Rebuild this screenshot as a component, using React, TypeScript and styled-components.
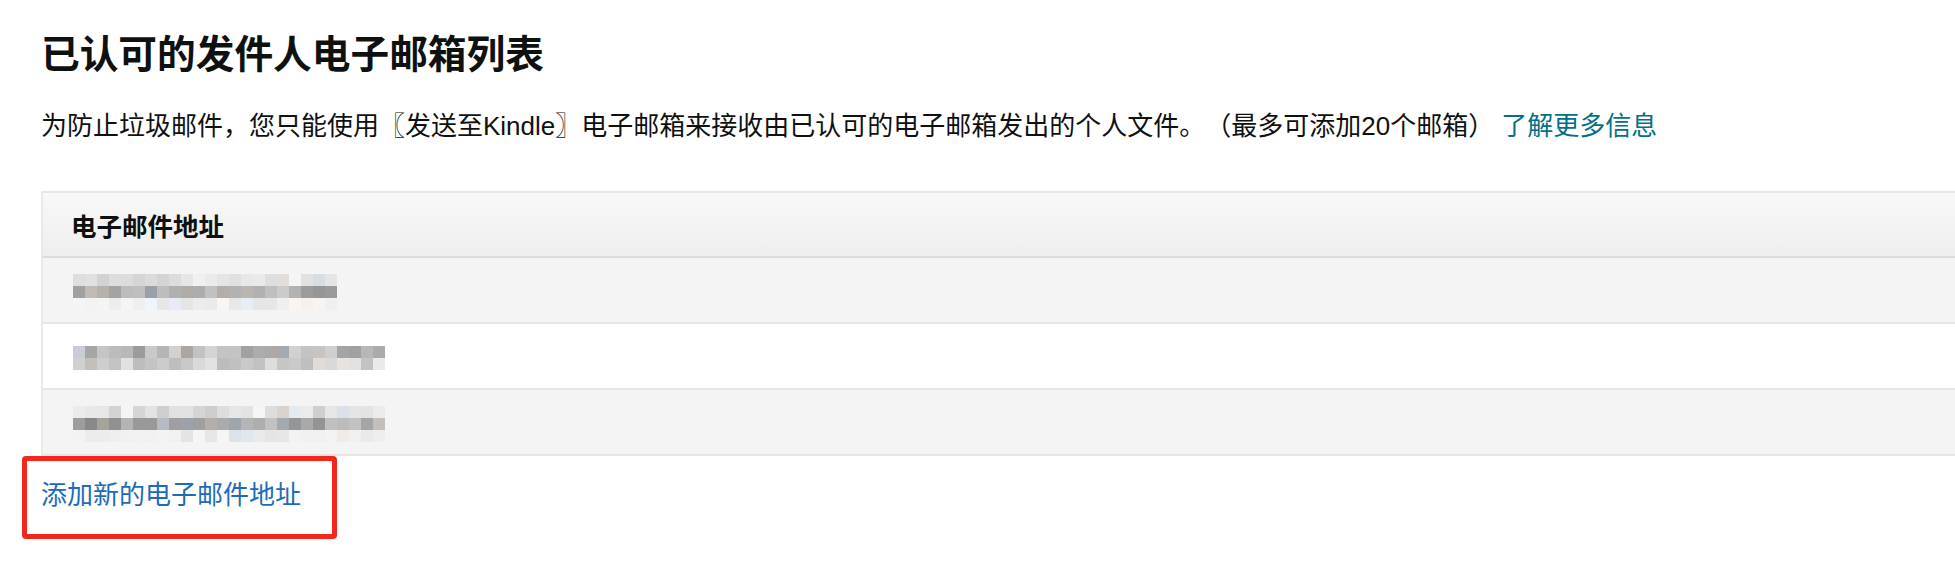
import React from "react";
import styled, { createGlobalStyle } from "styled-components";

const GlobalStyle = createGlobalStyle`
  html, body {
    margin: 0;
    padding: 0;
    background: #ffffff;
    overflow: hidden;
  }
  body {
    font-family: "Liberation Sans", "Noto Sans CJK SC", sans-serif;
    color: #0f1111;
    text-spacing-trim: space-all;
  }
`;

const Page = styled.div`
  width: 1955px;
  box-sizing: border-box;
  padding: 32px 0 40px 41px;
`;

const Title = styled.h1`
  margin: 0;
  font-size: 38.7px;
  line-height: 46px;
  font-weight: 700;
  color: #0f1111;
`;

const Description = styled.p`
  margin: 30px 0 0 0;
  font-size: 26px;
  line-height: 36px;
  color: #0f1111;
  white-space: nowrap;
  text-spacing-trim: space-all;
`;

const InfoLink = styled.a`
  color: #007185;
  text-decoration: none;
  margin-left: 7px;
`;

const Table = styled.div`
  margin-top: 47px;
  margin-right: -30px;
  border-top: 2px solid #e6e6e6;
  border-left: 2px solid #e9e9e9;
  display: flex;
  flex-direction: column;
`;

const HeaderRow = styled.div`
  height: 63px;
  display: flex;
  align-items: center;
  padding-left: 28px;
  background: linear-gradient(#f8f8f8, #eeeeee);
  box-shadow: inset 0 1px 0 #fbfbfb;
  border-bottom: 2px solid #dcdcdc;
  font-size: 25.5px;
  font-weight: 700;
  color: #0f1111;
`;

const Row = styled.div<{ $alt: boolean }>`
  height: 64px;
  display: flex;
  align-items: center;
  padding-left: 30px;
  background: ${(p) => (p.$alt ? "#f4f4f4" : "#ffffff")};
  border-bottom: 2px solid #e6e6e6;
`;

const MosaicSvg = styled.svg<{ $shift: number }>`
  display: block;
  margin-top: ${(p) => p.$shift}px;
  filter: blur(0.5px);
`;

const LinkArea = styled.div`
  position: relative;
  padding-top: 21px;
`;

const AddLink = styled.a`
  display: inline-block;
  font-size: 26px;
  line-height: 36px;
  color: #1e6bb8;
  text-decoration: none;
`;

const Highlight = styled.div`
  position: absolute;
  top: 0;
  left: -19px;
  width: 315px;
  height: 83px;
  box-sizing: border-box;
  border: 5px solid #f3281c;
  border-radius: 4px;
  pointer-events: none;
`;

function prng(seed: number) {
  let a = seed;
  return () => {
    a |= 0;
    a = (a + 0x6d2b79f5) | 0;
    let t = Math.imul(a ^ (a >>> 15), 1 | a);
    t = (t + Math.imul(t ^ (t >>> 7), 61 | t)) ^ t;
    return ((t ^ (t >>> 14)) >>> 0) / 4294967296;
  };
}

type Band = [number, number];

function Mosaic({
  cols,
  bands,
  seed,
  shift,
}: {
  cols: number;
  bands: Band[];
  seed: number;
  shift: number;
}) {
  const cell = 12;
  const rnd = prng(seed);
  const rects: React.ReactNode[] = [];
  bands.forEach(([lo, hi], r) => {
    for (let c = 0; c < cols; c++) {
      let v = lo + rnd() * (hi - lo);
      if (rnd() < 0.12) v = Math.min(245, v + 25);
      const tint = rnd();
      let rr = v,
        gg = v,
        bb = v;
      if (tint < 0.08) {
        bb = v + 8;
        rr = v - 6;
      } else if (tint < 0.14) {
        rr = v + 6;
        bb = v - 5;
      }
      const col = `rgb(${Math.round(rr)},${Math.round(gg)},${Math.round(bb)})`;
      rects.push(
        <rect key={`${r}-${c}`} x={c * cell} y={r * cell} width={cell} height={cell} fill={col} />
      );
    }
  });
  return (
    <MosaicSvg
      $shift={shift}
      width={cols * cell}
      height={bands.length * cell}
      viewBox={`0 0 ${cols * cell} ${bands.length * cell}`}
    >
      {rects}
    </MosaicSvg>
  );
}

const rows = [
  { cols: 22, seed: 11, bands: [[208, 236], [145, 195], [228, 246]] as Band[], shift: 4 },
  { cols: 26, seed: 27, bands: [[155, 218], [188, 228]] as Band[], shift: 4 },
  { cols: 26, seed: 43, bands: [[205, 236], [135, 195], [226, 246]] as Band[], shift: 4 },
];

export default function App() {
  return (
    <>
      <GlobalStyle />
      <Page>
        <Title>已认可的发件人电子邮箱列表</Title>
        <Description>
          为防止垃圾邮件，您只能使用〖发送至Kindle〗电子邮箱来接收由已认可的电子邮箱发出的个人文件。（最多可添加20个邮箱）
          <InfoLink href="#">了解更多信息</InfoLink>
        </Description>
        <Table>
          <HeaderRow>电子邮件地址</HeaderRow>
          {rows.map((r, i) => (
            <Row key={i} $alt={i % 2 === 0}>
              <Mosaic cols={r.cols} bands={r.bands} seed={r.seed} shift={r.shift} />
            </Row>
          ))}
        </Table>
        <LinkArea>
          <AddLink href="#">添加新的电子邮件地址</AddLink>
          <Highlight />
        </LinkArea>
      </Page>
    </>
  );
}
